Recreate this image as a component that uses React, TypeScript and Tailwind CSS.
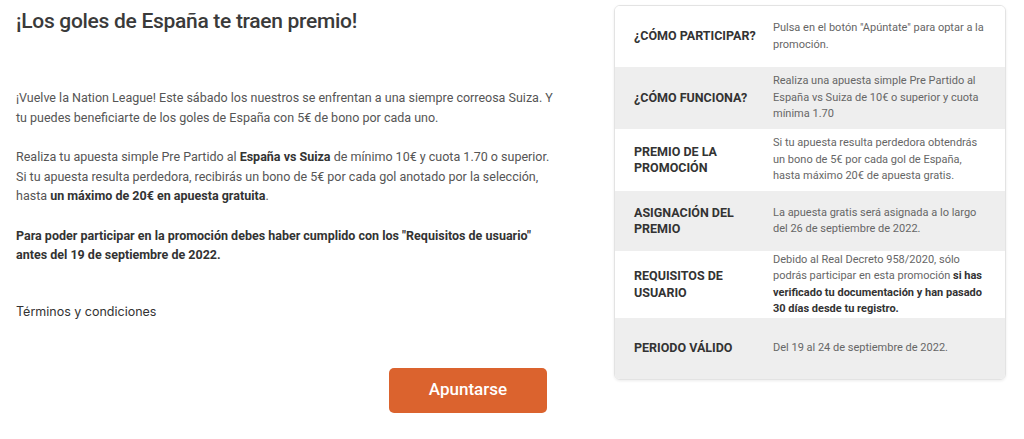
import React from "react";

// Promoción: goles de España

interface Row {
  label: string;
  value: React.ReactNode;
  h: string;
}

const rows: Row[] = [
  {
    label: "¿CÓMO PARTICIPAR?",
    value: <>Pulsa en el botón "Apúntate" para optar a la promoción.</>,
    h: "h-[61px]",
  },
  {
    label: "¿CÓMO FUNCIONA?",
    value: <>Realiza una apuesta simple Pre Partido al España vs Suiza de 10€ o superior y cuota mínima 1.70</>,
    h: "h-[62px]",
  },
  {
    label: "PREMIO DE LA PROMOCIÓN",
    value: <>Si tu apuesta resulta perdedora obtendrás un bono de 5€ por cada gol de España, hasta máximo 20€ de apuesta gratis.</>,
    h: "h-[62px]",
  },
  {
    label: "ASIGNACIÓN DEL PREMIO",
    value: <>La apuesta gratis será asignada a lo largo del 26 de septiembre de 2022.</>,
    h: "h-[60px]",
  },
  {
    label: "REQUISITOS DE USUARIO",
    value: (
      <>
        Debido al Real Decreto 958/2020, sólo podrás participar en esta promoción{" "}
        <b className="font-bold text-[#333]">si has verificado tu documentación y han pasado 30 días desde tu registro.</b>
      </>
    ),
    h: "h-[67px]",
  },
  {
    label: "PERIODO VÁLIDO",
    value: <>Del 19 al 24 de septiembre de 2022.</>,
    h: "h-[61px]",
  },
];

export default function App() {
  return (
    <div className="w-[1024px] h-[439px] bg-white flex pl-4 pr-[18px] pt-[4px] font-['Roboto',sans-serif] overflow-hidden">
      {/* columna izquierda */}
      <div className="w-[540px] flex flex-col">
        <h1 className="text-[21px] leading-[30px] tracking-[-0.3px] font-medium text-[#3a3a3a] mt-[2px]">
          ¡Los goles de España te traen premio!
        </h1>

        <div className="mt-[52px] w-[540px] text-[12.5px] leading-[19.5px] text-[#555] flex flex-col gap-[20px]">
          <p>
            ¡Vuelve la Nation League! Este sábado los nuestros se enfrentan a una siempre correosa Suiza. Y tu puedes
            beneficiarte de los goles de España con 5€ de bono por cada uno.
          </p>
          <p>
            Realiza tu apuesta simple Pre Partido al <b className="font-bold text-[#333]">España vs Suiza</b> de mínimo
            10€ y cuota 1.70 o superior. Si tu apuesta resulta perdedora, recibirás un bono de 5€ por cada gol anotado
            por la selección, hasta <b className="font-bold text-[#333]">un máximo de 20€ en apuesta gratuita</b>.
          </p>
          <p className="font-bold text-[#333]">
            Para poder participar en la promoción debes haber cumplido con los "Requisitos de usuario" antes del 19 de
            septiembre de 2022.
          </p>
        </div>

        <p className="mt-[38px] text-[12.5px] leading-[18px] text-[#333] font-['Inter',sans-serif]">
          Términos y condiciones
        </p>

        <div className="mt-[47px] flex justify-end">
          <button className="w-[158px] h-[45px] rounded-[5px] bg-[#db632e] text-white text-[17px] font-medium mr-[9px]">
            Apuntarse
          </button>
        </div>
      </div>

      {/* tabla de condiciones */}
      <div className="ml-auto w-[392px] self-start mt-[1px] rounded-md border border-[#e3e3e3] shadow-[0_1px_3px_rgba(0,0,0,0.08)] overflow-hidden">
        {rows.map((r, i) => (
          <div
            key={r.label}
            className={`flex items-center ${r.h} ${i % 2 === 1 ? "bg-[#eeeeee]" : "bg-white"}`}
          >
            <div className="w-[158px] shrink-0 pl-[19px] pr-[10px] text-[12.5px] leading-[16.5px] font-bold text-[#333]">
              {r.label}
            </div>
            <div className="w-[216px] text-[11px] leading-[16.5px] text-[#666]">{r.value}</div>
          </div>
        ))}
      </div>
    </div>
  );
}
